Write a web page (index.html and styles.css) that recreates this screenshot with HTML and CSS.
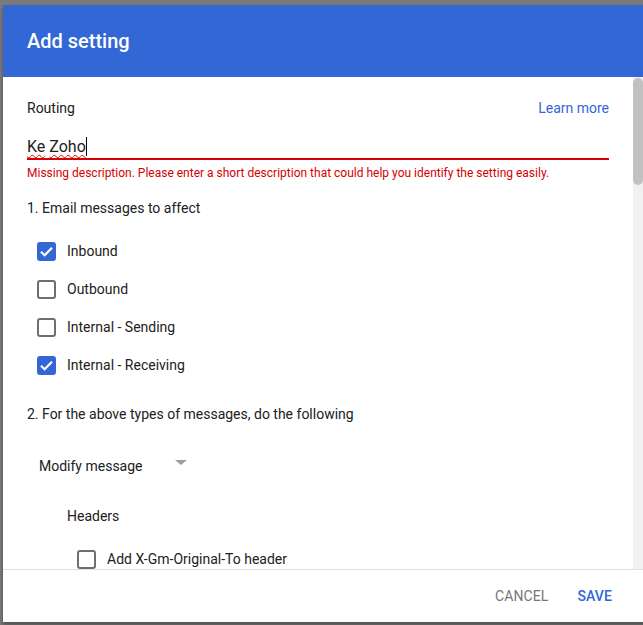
FILE: index.html
```html
<!DOCTYPE html>
<html>
<head>
<meta charset="utf-8">
<link rel="stylesheet" href="styles.css">
</head>
<body>
<div class="dialog">
  <div class="dlg-header">Add setting</div>
  <div class="dlg-body">
    <div class="content">
      <div class="row-top">
        <span class="label">Routing</span>
        <span class="link">Learn more</span>
      </div>
      <div class="input"><span class="sp">Ke</span> <span class="sp">Zoho</span><span class="caret"></span></div>
      <div class="error">Missing description. Please enter a short description that could help you identify the setting easily.</div>
      <div class="section">1. Email messages to affect</div>
      <div class="checks">
        <div class="check"><span class="box on"><svg viewBox="0 0 19 19" width="19" height="19"><path d="M4 9.8 L7.6 13.3 L15 5.8" fill="none" stroke="#fff" stroke-width="2.2"/></svg></span><span class="clabel">Inbound</span></div>
        <div class="check"><span class="box"></span><span class="clabel">Outbound</span></div>
        <div class="check"><span class="box"></span><span class="clabel">Internal - Sending</span></div>
        <div class="check"><span class="box on"><svg viewBox="0 0 19 19" width="19" height="19"><path d="M4 9.8 L7.6 13.3 L15 5.8" fill="none" stroke="#fff" stroke-width="2.2"/></svg></span><span class="clabel">Internal - Receiving</span></div>
      </div>
      <div class="section s2">2. For the above types of messages, do the following</div>
      <div class="select"><span>Modify message</span><span class="arrow"></span></div>
      <div class="sub">Headers</div>
      <div class="check sub-check"><span class="box"></span><span class="clabel">Add X-Gm-Original-To header</span></div>
    </div>
    <div class="scrollbar"><div class="thumb"></div></div>
  </div>
  <div class="dlg-footer">
    <span class="btn cancel">CANCEL</span>
    <span class="btn save">SAVE</span>
  </div>
</div>
</body>
</html>
```

FILE: styles.css
```css
html, body {
  margin: 0;
  padding: 0;
}
body {
  width: 643px;
  height: 625px;
  overflow: hidden;
  background: #7a7a7a;
  font-family: Roboto, "Liberation Sans", Arial, sans-serif;
  color: #212121;
}
.dialog {
  margin: 5px 0 0 3px;
  width: 660px;
  height: 617px;
  background: #fff;
  display: flex;
  flex-direction: column;
  box-shadow: 0 3px 4px rgba(0,0,0,0.35);
}
.dlg-header {
  height: 72px;
  flex: none;
  background: #3367d6;
  color: #fff;
  font-size: 20px;
  font-weight: 500;
  line-height: 72px;
  padding-left: 24px;
}
.dlg-body {
  flex: 1;
  display: flex;
  overflow: hidden;
  min-height: 0;
}
.content {
  width: 582px;
  padding: 0 24px;
  flex: none;
  overflow: hidden;
}
.scrollbar {
  width: 10px;
  flex: none;
  background: #f1f1f1;
  display: flex;
  flex-direction: column;
}
.thumb {
  height: 107px;
  background: #c1c1c1;
  border-radius: 5px;
  margin-top: 1px;
}
.row-top {
  display: flex;
  justify-content: space-between;
  margin-top: 21px;
  font-size: 14px;
  line-height: 20px;
}
.link {
  color: #3367d6;
}
.input {
  margin-top: 19px;
  font-size: 16px;
  line-height: 20px;
  height: 21px;
  border-bottom: 2px solid #d50000;
  color: #212121;
}
.sp {
  text-decoration-line: underline;
  text-decoration-style: wavy;
  text-decoration-color: #e00;
  text-decoration-thickness: 1px;
  text-underline-offset: 2px;
}
.caret {
  display: inline-block;
  width: 1px;
  height: 19px;
  background: #000;
  vertical-align: -4px;
}
.error {
  margin-top: 5px;
  font-size: 12px;
  line-height: 16px;
  color: #d50000;
}
.section {
  margin-top: 17px;
  font-size: 14px;
  line-height: 20px;
}
.checks {
  margin-top: 14px;
}
.check {
  display: flex;
  align-items: center;
  height: 38px;
  padding-left: 10px;
  font-size: 14px;
}
.box {
  width: 15px;
  height: 15px;
  border: 2px solid #6e6e6e;
  border-radius: 3px;
  flex: none;
  position: relative;
}
.box.on {
  background: #3367d6;
  border-color: #3367d6;
}
.box svg {
  position: absolute;
  left: -2px;
  top: -2px;
}
.clabel {
  margin-left: 11px;
}
.s2 {
  margin-top: 20px;
}
.select {
  margin-top: 32px;
  padding-left: 12px;
  font-size: 14px;
  line-height: 20px;
  display: flex;
  align-items: center;
}
.arrow {
  width: 0;
  height: 0;
  border-left: 6px solid transparent;
  border-right: 6px solid transparent;
  border-top: 5px solid #9e9e9e;
  margin-left: 32px;
  margin-top: -8px;
}
.sub {
  margin-top: 30px;
  padding-left: 40px;
  font-size: 14px;
  line-height: 20px;
}
.sub-check {
  margin-top: 14px;
  padding-left: 50px;
}
.dlg-footer {
  flex: none;
  height: 52px;
  border-top: 1px solid #e0e0e0;
  display: flex;
  align-items: center;
  justify-content: flex-end;
  padding-right: 51px;
  font-size: 14px;
  font-weight: 500;
}
.btn {
  letter-spacing: 0.1px;
}
.cancel {
  color: #757575;
  font-weight: 400;
}
.save {
  color: #3367d6;
  margin-left: 29px;
}
```
